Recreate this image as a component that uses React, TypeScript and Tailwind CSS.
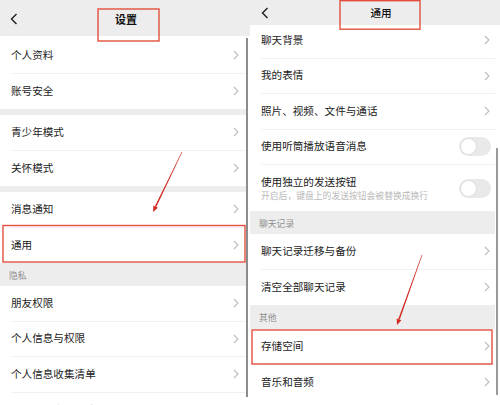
import type { ReactNode } from 'react';

const FONT = "[font-family:'Noto_Sans_CJK_SC','Noto_Sans',sans-serif]";

function Chevron() {
  return (
    <svg width="6" height="10" viewBox="0 0 6 10" className="shrink-0">
      <path d="M1 1l4 4-4 4" fill="none" stroke="#bdbdbd" strokeWidth="1.1" />
    </svg>
  );
}

function BackArrow() {
  return (
    <svg width="8" height="12" viewBox="0 0 8 12">
      <path d="M6.5 1L1.5 6l5 5" fill="none" stroke="#1f1f1f" strokeWidth="1.4" />
    </svg>
  );
}

function Toggle() {
  return (
    <div className="w-[32px] h-[19px] rounded-full bg-[#e9e9e9] flex items-center pl-[1px] shrink-0">
      <div className="w-[17px] h-[17px] rounded-full bg-white border border-[#dcdcdc]" />
    </div>
  );
}

interface RowProps {
  label: string;
  h?: string;
  last?: boolean;
  pr?: string;
  right?: ReactNode;
}

function Row({ label, h = 'h-[35.5px]', last, pr = 'pr-[7px]', right }: RowProps) {
  return (
    <div className={`bg-white pl-[11px] shrink-0 ${h}`}>
      <div
        className={`h-full flex items-center justify-between ${pr} ${
          last ? '' : 'border-b border-[#f1f1f1]'
        }`}
      >
        <span className="text-[10.6px] text-[#1b1b1b] leading-none">{label}</span>
        {right ?? <Chevron />}
      </div>
    </div>
  );
}

function Section({ label, h, pb }: { label: string; h: string; pb: string }) {
  return (
    <div className={`bg-[#ededed] pl-[9px] flex items-end shrink-0 ${h} ${pb}`}>
      <span className="text-[8.8px] text-[#8f8f8f] leading-none">{label}</span>
    </div>
  );
}

function LeftPanel() {
  return (
    <div className="w-[246px] h-full flex flex-col overflow-hidden bg-white">
      <div className="h-[36px] bg-[#ededed] grid grid-cols-[30px_1fr_24px] items-center shrink-0">
        <div className="pl-[10px] pt-[2px]">
          <BackArrow />
        </div>
        <div className="text-center text-[11px] font-bold text-[#111] pt-[2px]">设置</div>
        <div />
      </div>
      <div className="flex flex-col mt-[2px]">
        <Row label="个人资料" />
        <Row label="账号安全" last />
        <div className="h-[6px] bg-[#ededed] shrink-0" />
        <Row label="青少年模式" />
        <Row label="关怀模式" last />
        <div className="h-[6px] bg-[#ededed] shrink-0" />
        <Row label="消息通知" />
        <Row label="通用" last />
        <Section label="隐私" h="h-[23px]" pb="pb-[5px]" />
        <Row label="朋友权限" />
        <Row label="个人信息与权限" />
        <Row label="个人信息收集清单" />
        <Row label="第三方信息共享清单" last />
      </div>
    </div>
  );
}

function RightPanel() {
  return (
    <div className="w-[250px] h-full flex flex-col overflow-hidden bg-white">
      <div className="h-[25px] bg-[#ededed] grid grid-cols-[30px_1fr_18px] items-center shrink-0 relative z-10">
        <div className="pl-[11px]">
          <BackArrow />
        </div>
        <div className="text-center text-[10.6px] font-medium text-[#111]">通用</div>
        <div />
      </div>
      <div className="flex-1 flex min-h-0">
        <div className="w-[245px] flex flex-col -mt-[2px]">
          <Row label="聊天背景" pr="pr-[5px]" />
          <Row label="我的表情" pr="pr-[5px]" />
          <Row label="照片、视频、文件与通话" pr="pr-[5px]" />
          <Row label="使用听筒播放语音消息" pr="pr-[4px]" right={<Toggle />} />
          <div className="bg-white pl-[11px] h-[46px] shrink-0 flex items-center justify-between pr-[4px]">
            <div className="flex flex-col gap-[1px]">
              <span className="text-[10.6px] text-[#1b1b1b] leading-[14px]">使用独立的发送按钮</span>
              <span className="text-[8.8px] text-[#b8b8b8] leading-[12px]">
                开启后，键盘上的发送按钮会被替换成换行
              </span>
            </div>
            <Toggle />
          </div>
          <Section label="聊天记录" h="h-[23px]" pb="pb-[5px]" />
          <Row label="聊天记录迁移与备份" pr="pr-[5px]" />
          <Row label="清空全部聊天记录" pr="pr-[5px]" last />
          <Section label="其他" h="h-[24px]" pb="pb-[6px]" />
          <Row label="存储空间" pr="pr-[5px]" />
          <Row label="音乐和音频" pr="pr-[5px]" last />
        </div>
        <div className="w-[5px] flex flex-col">
          <div className="ml-[1px] mt-[123px] w-[2px] h-[247px] bg-[#9a9a9a]" />
        </div>
      </div>
    </div>
  );
}

function Annotations() {
  return (
    <svg
      className="absolute inset-0 z-20 pointer-events-none"
      width="500"
      height="405"
      viewBox="0 0 500 405"
    >
      <g fill="none" stroke="#e2503c" strokeWidth="1.4">
        <rect x="98" y="9" width="61" height="32" />
        <rect x="3" y="225.5" width="242" height="36.5" />
        <rect x="340" y="0.7" width="80" height="28.5" />
        <rect x="252" y="330" width="240" height="34" />
      </g>
      <g fill="#d12a22">
        <polygon points="182.3,152.1 181.7,151.9 154.9,206.3 156.3,207" />
        <polygon points="153,212 157.9,207.7 153.4,205.5" />
        <polygon points="422.3,255.1 421.7,254.9 398.3,319 399.8,319.6" />
        <polygon points="397,325 401.4,320.2 396.7,318.5" />
      </g>
    </svg>
  );
}

export default function App() {
  return (
    <div className={`relative w-[500px] h-[405px] flex overflow-hidden bg-white ${FONT}`}>
      <LeftPanel />
      <div className="w-[4px] h-full flex flex-col bg-white">
        <div className="h-[36px] bg-[#ededed]" />
        <div className="mt-[2px] w-[2px] h-[359px] bg-[#8c8c8c]" />
      </div>
      <RightPanel />
      <Annotations />
    </div>
  );
}
